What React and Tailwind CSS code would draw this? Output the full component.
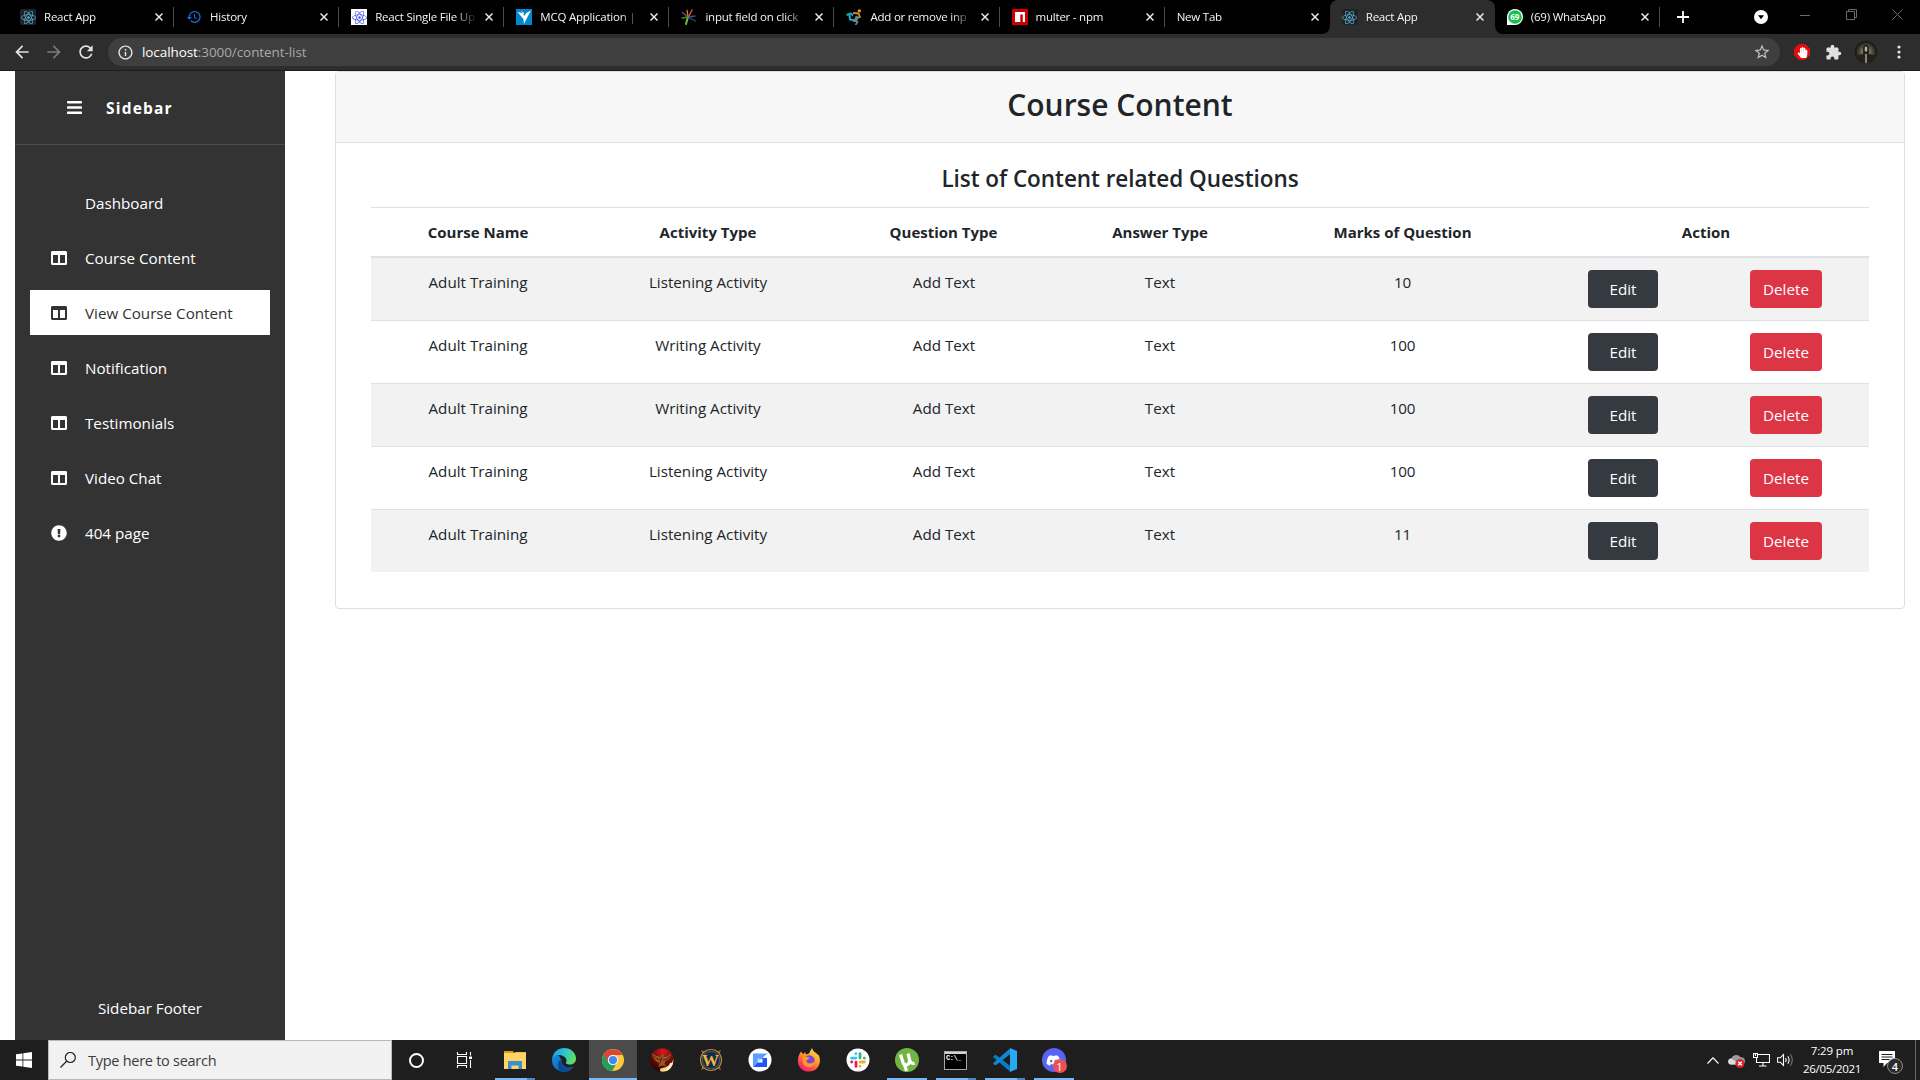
import React from "react";
import { FaReact, FaColumns, FaExclamationCircle, FaBars, FaDiscord, FaHandPaper } from "react-icons/fa";
import { MdExtension, MdHistory, MdStarBorder, MdArrowBack, MdArrowForward, MdRefresh, MdInfoOutline } from "react-icons/md";

/* ---------- favicons ---------- */

const ReactDark = () => (
  <span className="flex h-4 w-4 items-center justify-center rounded-[2px] bg-[#20232a]">
    <FaReact className="h-[15px] w-[15px] text-[#61dafb] opacity-80" />
  </span>
);

const ReactLight = () => (
  <span className="flex h-4 w-4 items-center justify-center bg-white">
    <FaReact className="h-[15px] w-[15px] text-[#4a5be8]" />
  </span>
);

const HistoryIcon = () => <MdHistory className="h-4 w-4 text-[#1a6fe0]" />;

const FreelancerIcon = () => (
  <svg viewBox="0 0 16 16" className="h-4 w-4">
    <rect width="16" height="16" fill="#0087cf" />
    <path d="M1.500 3 6.300 4 8.300 7l2-3L15 1.500l-3 5.500-4 8-.6-5z" fill="#fff" />
    <path d="m5.200 2 2.300 1.300.8 3z" fill="#fff" />
  </svg>
);

const BurstIcon = () => (
  <svg viewBox="0 0 16 16" className="h-4 w-4" fill="none" strokeWidth="1.3" strokeLinecap="round">
    <path d="M7 8 5 15" stroke="#6cc02c" strokeWidth="2" />
    <path d="M7 8 1 9" stroke="#4d8a2a" />
    <path d="M6.5 7.5 1.5 3.5" stroke="#7b4c9c" />
    <path d="M7 7 6 1.5" stroke="#c49a28" />
    <path d="M8 7 11 1" stroke="#d9482f" strokeWidth="1.6" />
    <path d="M8.5 8 14 7" stroke="#355a9a" />
    <path d="m8 9 6.5 3" stroke="#3d3f8a" />
  </svg>
);

const DancerIcon = () => (
  <svg viewBox="0 0 16 16" className="h-4 w-4" fill="none" strokeLinejoin="round">
    <circle cx="13.300" cy="1.900" r="1.700" fill="#e39a27" />
    <path d="M7 3.800 12.500 4.500 14 8l-3.500 1.200" stroke="#d88d1f" strokeWidth="1.800" />
    <path d="M.5 6 5 4.500l2 2M3.500 5.500 4 10.500l5 1L11 7" stroke="#22a4c4" strokeWidth="2.100" />
    <path d="M7 12.500 10 12l1.500 1-2 3M11.500 9.500 9.500 13" stroke="#6f7c89" strokeWidth="1.700" />
  </svg>
);

const NpmIcon = () => (
  <svg viewBox="0 0 16 16" className="h-4 w-4">
    <rect width="16" height="16" fill="#cb0000" />
    <path d="M3 3h10v10h-2.200V5.500H8.300V13H3z" fill="#fff" />
  </svg>
);

const WhatsAppIcon = () => (
  <span className="relative flex h-4 w-4 items-center justify-center">
    <svg viewBox="0 0 16 16" className="absolute inset-0 h-4 w-4">
      <path d="M0 16V8a8 8 0 1 1 8 8z" fill="#fff" />
      <circle cx="8" cy="8" r="6.800" fill="#12c04a" />
    </svg>
    <span className="relative text-[8px] leading-none font-bold text-white">69</span>
  </span>
);

const CloseX = ({ className = "" }) => (
  <svg viewBox="0 0 8 8" className={"h-2 w-2 shrink-0 " + className} stroke="#e8e8e8" strokeWidth="1.500" fill="none">
    <path d="m.5.5 7 7m0-7-7 7" />
  </svg>
);

const tabs = [
  { title: "React App", icon: ReactDark, sep: true, first: true },
  { title: "History", icon: HistoryIcon, sep: true },
  { title: "React Single File Up", icon: ReactLight, sep: true },
  { title: "MCQ Application |", icon: FreelancerIcon, sep: true },
  { title: "input field on click", icon: BurstIcon, sep: true },
  { title: "Add or remove inp", icon: DancerIcon, sep: true },
  { title: "multer - npm", icon: NpmIcon, sep: true },
  { title: "New Tab" },
  { title: "React App", icon: ReactDark, active: true },
  { title: "(69) WhatsApp", icon: WhatsAppIcon, sep: true },
];

function Tab({ title, icon: Icon, sep, active, first }) {
  return (
    <div className={"relative flex h-[34px] w-[165.100px] shrink-0 items-center pr-[11px] " + (first ? "pl-[11px] " : "pl-[12px] ") + (active ? "rounded-t-lg bg-[#2d2d2d]" : "")}>
      {Icon && <span className="mr-2 shrink-0"><Icon /></span>}
      <span className="min-w-0 flex-1 overflow-hidden text-[11.500px] leading-[16px] tracking-[-0.220px] whitespace-nowrap text-[#f4f4f4] [mask-image:linear-gradient(to_right,#000_calc(100%-22px),transparent_100%)]">
        {title}
      </span>
      <CloseX className="ml-[8px]" />
      {sep && <span className="absolute top-[7px] right-0 h-5 w-px bg-[#4c4c4c]" />}
      {active && (
        <>
          <svg viewBox="0 0 8 8" className="absolute bottom-0 -left-2 h-2 w-2"><path d="M8 0v8H0a8 8 0 0 0 8-8" fill="#2d2d2d" /></svg>
          <svg viewBox="0 0 8 8" className="absolute -right-2 bottom-0 h-2 w-2"><path d="M0 0v8h8a8 8 0 0 1-8-8" fill="#2d2d2d" /></svg>
        </>
      )}
    </div>
  );
}

function TabStrip() {
  return (
    <div className="flex h-[34px] bg-black pl-[9px]">
      {tabs.map((t, i) => <Tab key={i} {...t} />)}
      <div className="flex flex-1 items-center">
        <svg viewBox="0 0 12 12" className="ml-[17px] h-3 w-3" stroke="#fff" strokeWidth="1.800"><path d="M6 0v12M0 6h12" /></svg>
        <svg viewBox="0 0 14 14" className="ml-[65px] h-[14px] w-[14px]"><circle cx="7" cy="7" r="7" fill="#fff" /><path d="M4 5.200h6L7 9.200z" fill="#000" /></svg>
        <svg viewBox="0 0 10 10" className="mb-[5px] ml-[32px] h-[10px] w-[10px]" stroke="#6b6b6b"><path d="M0 5.500h10" /></svg>
        <svg viewBox="0 0 11 11" className="mb-[6px] ml-[36px] h-[11px] w-[11px]" fill="none" stroke="#6b6b6b"><path d="M.5 2.500h8v8h-8zM2.500 2.500v-2h8v8h-2" /></svg>
        <svg viewBox="0 0 11 11" className="mb-[6px] ml-[35px] h-[11px] w-[11px]" fill="none" stroke="#6b6b6b"><path d="m.5.5 10 10m0-10-10 10" /></svg>
      </div>
    </div>
  );
}

function Toolbar() {
  return (
    <div className="flex h-[37px] items-center border-b border-[#1d1a1a] bg-[#2d2d2d]">
      <MdArrowBack className="ml-[12px] h-5 w-5 text-[#e4e4e4]" />
      <MdArrowForward className="ml-[12px] h-5 w-5 text-[#7b7b7b]" />
      <MdRefresh className="ml-[12px] h-5 w-5 text-[#e4e4e4]" />
      <div className="ml-[12px] flex h-7 w-[1672px] items-center rounded-full bg-[#3f3f3f] pr-[9px] pl-[9px]">
        <MdInfoOutline className="h-[17px] w-[17px] text-[#e4e4e4]" />
        <span className="ml-[8px] flex-1 pt-[1px] text-[13.500px] leading-none tracking-[-0.080px] text-[#a9a9a9]">
          <span className="text-white">localhost</span>:3000/content-list
        </span>
        <MdStarBorder className="h-[18px] w-[18px] text-[#c4c4c4]" />
      </div>
      <span className="ml-[14px] flex h-4 w-4 items-center justify-center bg-[#e40d0d] [clip-path:polygon(30%_0,70%_0,100%_30%,100%_70%,70%_100%,30%_100%,0_70%,0_30%)]">
        <FaHandPaper className="h-[11px] w-[11px] text-white" />
      </span>
      <MdExtension className="ml-[15px] h-[17px] w-[17px] text-[#e0e0e0]" />
      <svg viewBox="0 0 22 22" className="ml-[13px] h-[22px] w-[22px]">
        <defs>
          <radialGradient id="portrait"><stop offset="0" stopColor="#aaa58c" /><stop offset=".6" stopColor="#4d4a3b" /><stop offset="1" stopColor="#11110e" /></radialGradient>
          <clipPath id="portraitClip"><circle cx="11" cy="11" r="11" /></clipPath>
        </defs>
        <g clipPath="url(#portraitClip)">
          <rect width="22" height="22" fill="url(#portrait)" />
          <path d="M0 22v-7l8-2V6q3-5 6 0v7l8 2v7z" fill="#22211b" />
          <path d="M9.700 6.500q1.300-2 2.600 0v3l-1.300 1.500-1.300-1.500zM10.300 13h1.400v9h-1.400z" fill="#b9b399" />
        </g>
      </svg>
      <svg viewBox="0 0 4 14" className="ml-[20px] h-[14px] w-1" fill="#e4e4e4"><circle cx="2" cy="2" r="1.600" /><circle cx="2" cy="7" r="1.600" /><circle cx="2" cy="12" r="1.600" /></svg>
    </div>
  );
}

/* ---------- page ---------- */

const menu = [
  { label: "Dashboard" },
  { label: "Course Content", icon: FaColumns },
  { label: "View Course Content", icon: FaColumns, active: true },
  { label: "Notification", icon: FaColumns },
  { label: "Testimonials", icon: FaColumns },
  { label: "Video Chat", icon: FaColumns },
  { label: "404 page", icon: FaExclamationCircle },
];

function Sidebar() {
  return (
    <aside className="ml-[15px] flex w-[270px] shrink-0 flex-col bg-[#333] text-white">
      <div className="flex h-[74px] items-center border-b border-[#4c4c4c] pl-[51px]">
        <FaBars className="h-[17px] w-[17px]" />
        <span className="ml-[23px] pt-[3px] text-[15.500px] font-bold tracking-[1.200px]">Sidebar</span>
      </div>
      <nav className="mt-[35px] flex flex-col gap-[10px] px-[15px]">
        {menu.map(({ label, icon: Icon, active }) => (
          <div key={label} className={"flex h-[45px] items-center pl-[20px] text-[15.200px] " + (active ? "bg-white text-[#333]" : "")}>
            <span className="flex w-[18px] justify-center">{Icon && <Icon className="h-4 w-4" />}</span>
            <span className="ml-[17px] pt-[2px]">{label}</span>
          </div>
        ))}
      </nav>
      <div className="mt-auto flex h-[64px] items-center justify-center text-[15.200px]">Sidebar Footer</div>
    </aside>
  );
}

const rows = [
  ["Adult Training", "Listening Activity", "Add Text", "Text", "10"],
  ["Adult Training", "Writing Activity", "Add Text", "Text", "100"],
  ["Adult Training", "Writing Activity", "Add Text", "Text", "100"],
  ["Adult Training", "Listening Activity", "Add Text", "Text", "100"],
  ["Adult Training", "Listening Activity", "Add Text", "Text", "11"],
];

const heads = ["Course Name", "Activity Type", "Question Type", "Answer Type", "Marks of Question"];

function ContentTable() {
  return (
    <div className="mx-[35px] text-center text-[15.200px] leading-6 text-[#212529]">
      <div className="grid h-[51px] grid-cols-[214px_246px_225px_208px_277px_328px] border-t border-b-2 border-t-[#dee2e6] border-b-[#dee2e6] pt-[12px] text-[15px] font-bold">
        {heads.map((h) => <span key={h}>{h}</span>)}
        <span className="pl-[2px]">Action</span>
      </div>
      {rows.map((r, i) => (
        <div
          key={i}
          className={
            "grid grid-cols-[214px_246px_225px_208px_277px_164px_162px] pt-[12px] " +
            (i === 0 ? "h-[62px] " : "h-[63px] border-t border-[#dee2e6] ") +
            (i % 2 === 0 ? "bg-[#f2f2f2]" : "")
          }
        >
          {r.map((c, j) => <span key={j} className={j === 4 ? "tracking-[-0.200px]" : j === 2 ? "pl-px" : ""}>{c}</span>)}
          <span><button className="h-[38px] w-[70px] rounded bg-[#343a40] text-white">Edit</button></span>
          <span><button className="h-[38px] w-[72px] rounded bg-[#dc3545] text-white">Delete</button></span>
        </div>
      ))}
    </div>
  );
}

function Page() {
  return (
    <div className="flex h-[969px] bg-white">
      <Sidebar />
      <main className="ml-[50px] w-[1570px]">
        <section className="h-[538px] rounded border border-[#dfdfdf] text-[#212529]">
          <h2 className="flex h-[71px] items-center justify-center border-b border-[#dfdfdf] bg-[#f7f7f7] pb-[5px] text-[30px] font-semibold">Course Content</h2>
          <h4 className="flex h-[64px] items-center justify-center pt-[7px] text-[22.500px] font-semibold tracking-[-0.050px]">List of Content related Questions</h4>
          <ContentTable />
        </section>
      </main>
    </div>
  );
}

/* ---------- taskbar ---------- */

const Explorer = () => (
  <svg viewBox="0 0 24 24" className="h-6 w-6">
    <path d="M1 3h9l1 2H1z" fill="#e09b12" />
    <path d="M1 5h22v16H1z" fill="#fdd467" />
    <path d="M1 5h10l1.500-1H23v1z" fill="#f3bb3a" />
    <path d="M5 13h14v8h-3.500v-3.500h-7V21H5z" fill="#3f8fd0" />
  </svg>
);

const Edge = () => (
  <svg viewBox="0 0 24 24" className="h-6 w-6">
    <defs>
      <linearGradient id="edgeTop" x1="0" x2="1" y1=".3" y2=".5"><stop stopColor="#1a9fe0" /><stop offset=".5" stopColor="#2cc3d2" /><stop offset="1" stopColor="#66de5c" /></linearGradient>
      <linearGradient id="edgeLow" x1="0" y1="0" x2="1" y2="1"><stop stopColor="#1590dc" /><stop offset="1" stopColor="#0a55a5" /></linearGradient>
    </defs>
    <path d="M0 12a12 12 0 0 0 20.500 8.300c1.200-1.200 1.100-1.800.1-1.300C16 21 10 18 9.500 13.500 9 10.500 8 7 4 7 1.500 7 0 9.500 0 12" fill="url(#edgeLow)" />
    <path d="M8.200 23.300C4.500 19 5.500 12 10.500 10.500c-1 1.200-1.200 2.600-.8 4 1 4 6 6 10.800 4.600-3 4-8 5.600-12.300 4.200" fill="#094b93" />
    <path d="M.2 10.500C1.200 3.500 6.500 0 12 0c7 0 12 5 12 10.500 0 4-3 6-6 6-3.500 0-4.500-1.200-4-2 1.700-2.500-.5-6.500-5-7.300-4-.7-7.300.8-8.800 3.300" fill="url(#edgeTop)" />
  </svg>
);

const Chrome = () => (
  <svg viewBox="0 0 24 24" className="h-[22px] w-[22px]">
    <circle cx="12" cy="12" r="12" fill="#fbc93c" />
    <path d="M1.600 6A12 12 0 0 1 22.400 6.500H12a5.500 5.500 0 0 0-5 3.500L6.500 14.500z" fill="#dc4437" />
    <path d="M1.600 6A12 12 0 0 0 11 24l5.200-8.700-4.200 2.200a5.500 5.500 0 0 1-4.900-3z" fill="#1da15c" />
    <circle cx="12" cy="12" r="5.700" fill="#f1f1f1" />
    <circle cx="12" cy="12" r="4.500" fill="#4486f4" />
  </svg>
);

const Phoenix = () => (
  <svg viewBox="0 0 24 24" className="h-6 w-6">
    <defs><radialGradient id="ember" cx=".55" cy=".15" r=".8"><stop stopColor="#d81a1a" /><stop offset=".6" stopColor="#6e0b0b" /><stop offset="1" stopColor="#280404" /></radialGradient></defs>
    <circle cx="12" cy="12" r="11.800" fill="url(#ember)" />
    <path d="M23.500 11a12 12 0 0 1-11 12.700c-3-.2-3.500-2.500-1-3.500 5-1 9.500-3 12-9.200" fill="#f2cf7a" />
    <path d="M20 15c-1 4-3 6.500-7 8.300 5 .5 9-3.300 10-8.300z" fill="#fff0c4" />
    <path d="M2 5c3 3 6 3.500 8.500 4l1.500-3 1.800.5-.5 2.700c3-.5 5-1 7.700-3.700-.3 4.500-3 6.500-5.500 7.500l-1 3 2.500 2-5.500-.5-3.500 1.700 1.700-3.700C6 13.500 3 11 2 5" fill="#9c5826" />
    <path d="M3.500 8c3 3 5 3.500 7.500 3.500M19.500 8c-2 3-3.500 3.500-6.500 4M10 15l2-6" stroke="#4b1c0d" fill="none" />
  </svg>
);

const Wow = () => (
  <span className="relative flex h-6 w-6 items-center justify-center">
    <svg viewBox="0 0 24 24" className="absolute inset-0 h-6 w-6">
      <path d="m2 2 5 2h10l5-2-2 5v10l2 5-5-2H7l-5 2 2-5V7z" fill="#8f6e32" />
      <circle cx="12" cy="12" r="10.500" fill="#11151c" stroke="#b08a45" strokeWidth="1.200" />
      <circle cx="12" cy="12" r="8.700" fill="#152a4a" stroke="#4b5563" strokeWidth="1.200" />
    </svg>
    <span className="relative font-['Liberation_Serif',serif] text-[17px] leading-none font-bold text-[#f0b83c]">W</span>
  </span>
);

const BlueS = () => (
  <svg viewBox="0 0 24 24" className="h-6 w-6">
    <circle cx="12" cy="12" r="11.500" fill="#fff" />
    <path d="M5 5.500h14.500L9.500 14.500 5 19z" fill="#5b9dff" />
    <path d="M9.500 10.500 19 9.500V19H5l4.500-4.500h5V11z" fill="#1f57f0" />
    <path d="M9.500 10.500h5L9.500 14.500z" fill="#b9d5ff" />
    <path d="M14.500 10.200 19.500 5.500v4z" fill="#fff" />
  </svg>
);

const Firefox = () => (
  <svg viewBox="0 0 24 24" className="h-6 w-6">
    <defs><linearGradient id="fox" x1=".8" y1="0" x2=".2" y2="1"><stop stopColor="#ffe63b" /><stop offset=".45" stopColor="#ff9526" /><stop offset=".75" stopColor="#ff4052" /><stop offset="1" stopColor="#e51a80" /></linearGradient></defs>
    <path d="M2.500 6 4 3.500 6 6.200l2-2 1 2.200 3-.9 3-5.500c1 4 3.500 4 5 6l1.500 1C25 13 22 23.500 12 23.500S-1.500 14 2.500 6" fill="url(#fox)" />
    <circle cx="12.200" cy="12.500" r="5.300" fill="#7b45d8" />
    <path d="M6 9c3-1.500 4 .5 7 .7-1 1.600-3.500 1.500-3.500 3.500 1 3 6 2.800 8 0-.3 4-3 6-6 6-5-.2-7-5-5.500-10.200" fill="#ff9a2a" />
  </svg>
);

const Slack = () => (
  <svg viewBox="0 0 24 24" className="h-6 w-6">
    <circle cx="12" cy="12" r="11.500" fill="#fff" />
    <g fill="none" strokeWidth="2.800" strokeLinecap="round">
      <path d="M5.500 10.100H9.800M9.900 5.700v.1" stroke="#36c5f0" />
      <path d="M14 5.700v4.200M18.400 10.100h-.1" stroke="#2eb67d" />
      <path d="M14.200 14h4.300M14 18.300v-.1" stroke="#ecb22e" />
      <path d="M10 14.100v4.300M5.700 14h.1" stroke="#e01e5a" />
    </g>
  </svg>
);

const Utorrent = () => (
  <svg viewBox="0 0 24 24" className="h-6 w-6">
    <circle cx="12" cy="12" r="12" fill="#72b444" />
    <path d="M5.500 6.500 8 14.500q1.200 3.300 4 2.300Q15.500 15.300 14.500 11.500L13 5.500m1.800 7q1.500 4 4.700 2.500M9 15l2.500 8" stroke="#fff" strokeWidth="3.200" fill="none" />
  </svg>
);

const Cmd = () => (
  <span className="flex h-[19px] w-[23px] flex-col border border-[#a5a8ab] bg-black">
    <span className="h-[2px] bg-[#d0d3d6]" />
    <span className="pl-px font-['Liberation_Mono',monospace] text-[7px] leading-[8px] font-bold tracking-[-0.500px] text-white">C:\_</span>
  </span>
);

const VsCode = () => (
  <svg viewBox="0 0 24 24" className="h-6 w-6">
    <path d="M17.500 24 0 9l1.800-2h1.400L18 18.500z" fill="#0a7bc4" />
    <path d="M17.500 0 0 15.200 1.800 17h1.400L18 5.500z" fill="#1287cf" />
    <path d="M17 0v24l7-3V3z" fill="#29a9f2" />
  </svg>
);

const Discord = () => (
  <span className="relative flex h-6 w-6 items-center justify-center rounded-full bg-[#5865f2]">
    <FaDiscord className="h-[15px] w-[15px] text-white" />
    <span className="absolute -right-[1px] -bottom-[1px] flex h-[14px] w-[14px] items-center justify-center rounded-full bg-[#ee4f55] text-[11px] leading-none text-white">1</span>
  </span>
);

const apps = [
  { icon: Explorer, run: "multi" },
  { icon: Edge },
  { icon: Chrome, run: "active" },
  { icon: Phoenix },
  { icon: Wow },
  { icon: BlueS },
  { icon: Firefox },
  { icon: Slack },
  { icon: Utorrent, run: "one" },
  { icon: Cmd, run: "multi" },
  { icon: VsCode, run: "multi" },
  { icon: Discord, run: "one" },
];

function Taskbar() {
  return (
    <div className="flex h-10 bg-[#1e1e1e] text-white">
      <div className="flex w-12 items-center justify-center">
        <svg viewBox="0 0 16 16" className="h-4 w-4" fill="#fff"><path d="M0 2.300 6.500 1.400v6.200H0zM7.300 1.300 16 0v7.600H7.300zM0 8.400h6.500v6.200L0 13.700zM7.300 8.400H16V16l-8.700-1.200z" /></svg>
      </div>
      <div className="flex w-[344px] items-center border border-[#b9b9b9] bg-[#f1f1f1] pl-[11px]">
        <svg viewBox="0 0 16 16" className="h-4 w-4" fill="none" stroke="#222" strokeWidth="1.200"><circle cx="10.300" cy="5.500" r="5" /><path d="M6.800 9 .5 15.500" /></svg>
        <span className="ml-[12px] pt-[2px] text-[14.500px] tracking-[-0.270px] text-[#3c3c3c]">Type here to search</span>
      </div>
      <div className="flex w-12 items-center justify-center">
        <span className="h-[15px] w-[15px] rounded-full border-2 border-white" />
      </div>
      <div className="flex w-[48px] items-center justify-center">
        <svg viewBox="0 0 17 16" className="h-4 w-[17px]" fill="none" stroke="#fff" strokeWidth="1.100"><path d="M1.500 4.500h9v7h-9zM1.500 0v2.500h9V0M1.500 16v-2.500h9V16M14.500 0v3.500M14.500 8v8" /><path d="M13 4.500h3v2.500h-3z" fill="#fff" stroke="none" /></svg>
      </div>
      <div className="ml-[2px] flex">
        {apps.map(({ icon: Icon, run }, i) => (
          <div key={i} className="flex w-[49px] justify-center">
            <div className={"flex w-12 flex-col items-center " + (run === "active" ? "bg-[#4b4b4b]" : "")}>
              <div className="flex h-[38px] items-center pt-[2px]"><Icon /></div>
              {run === "active" && <span className="h-[2px] w-12 bg-[#76b9fb]" />}
              {run === "one" && <span className="h-[2px] w-10 bg-[#76b9fb]" />}
              {run === "multi" && <span className="h-[2px] w-10 border-r-8 border-[#4f86bd] bg-[#76b9fb]" />}
            </div>
          </div>
        ))}
      </div>
      <div className="ml-auto flex items-center">
        <svg viewBox="0 0 12 7" className="h-[7px] w-3" fill="none" stroke="#fff" strokeWidth="1.200"><path d="m.5 6.500 5.500-5.700 5.500 5.700" /></svg>
        <svg viewBox="0 0 17 14" className="mt-[2px] ml-[9px] h-[14px] w-[17px]">
          <path d="M3 10.500a3 3 0 0 1 .5-6 5 5 0 0 1 9-1.200 3.500 3.500 0 0 1 1.500 7.200z" fill="#9b9b9b" />
          <path d="M3 10.500a3 3 0 0 1 .5-6l8 6z" fill="#dcdcdc" />
          <circle cx="12" cy="9.500" r="4.500" fill="#d9242e" />
          <path d="m10.200 7.700 3.600 3.600m0-3.600-3.600 3.600" stroke="#fff" strokeWidth="1.300" />
        </svg>
        <svg viewBox="0 0 17 14" className="ml-[8px] h-[14px] w-[17px]" fill="none" stroke="#fff" strokeWidth="1.100"><path d="M5 1.500h11.500v8H3.500V5M10 9.500v3.500M6 13h7.500M.5.5h4v4h-4zM2.500 1v2" /></svg>
        <svg viewBox="0 0 17 14" className="ml-[7px] h-[14px] w-[17px]" fill="none" stroke="#fff" strokeWidth="1.100"><path d="M.5 4.800h2.800L6.500 1.500v11L3.300 9.200H.5zM8.500 5q1.300 2 0 4M10.800 3.200q2.600 3.800 0 7.600" /><path d="M13.300 1.300q4 5.700 0 11.400" stroke="#777" /></svg>
        <div className="ml-[7px] w-[62px] text-center text-[11.500px] leading-[18px] tracking-[-0.150px] whitespace-nowrap"><div>7:29 pm</div><div className="tracking-[-0.300px]">26/05/2021</div></div>
        <span className="relative ml-[16px] h-[26px] w-[25px]">
          <svg viewBox="0 0 16 16" className="absolute top-[4px] left-0 h-4 w-4"><path d="M0 0h16v12H8l-3.500 4v-4H0z" fill="#fff" /><path d="M2.500 3.500h11M2.500 6h11M2.500 8.500h8" stroke="#1e1e1e" /></svg>
          <span className="absolute top-[11px] left-[8px] flex h-4 w-4 items-center justify-center rounded-full border border-[#8a8a8a] bg-[#2b2b2b] text-[11px] leading-none font-semibold">4</span>
        </span>
        <span className="ml-[11px] h-10 w-px bg-[#6a6a6a]" />
        <span className="w-[4px]" />
      </div>
    </div>
  );
}

export default function App() {
  return (
    <div className="flex h-[1080px] w-[1920px] flex-col overflow-hidden bg-white font-['Open_Sans','Noto_Sans',sans-serif]">
      <TabStrip />
      <Toolbar />
      <Page />
      <Taskbar />
    </div>
  );
}
